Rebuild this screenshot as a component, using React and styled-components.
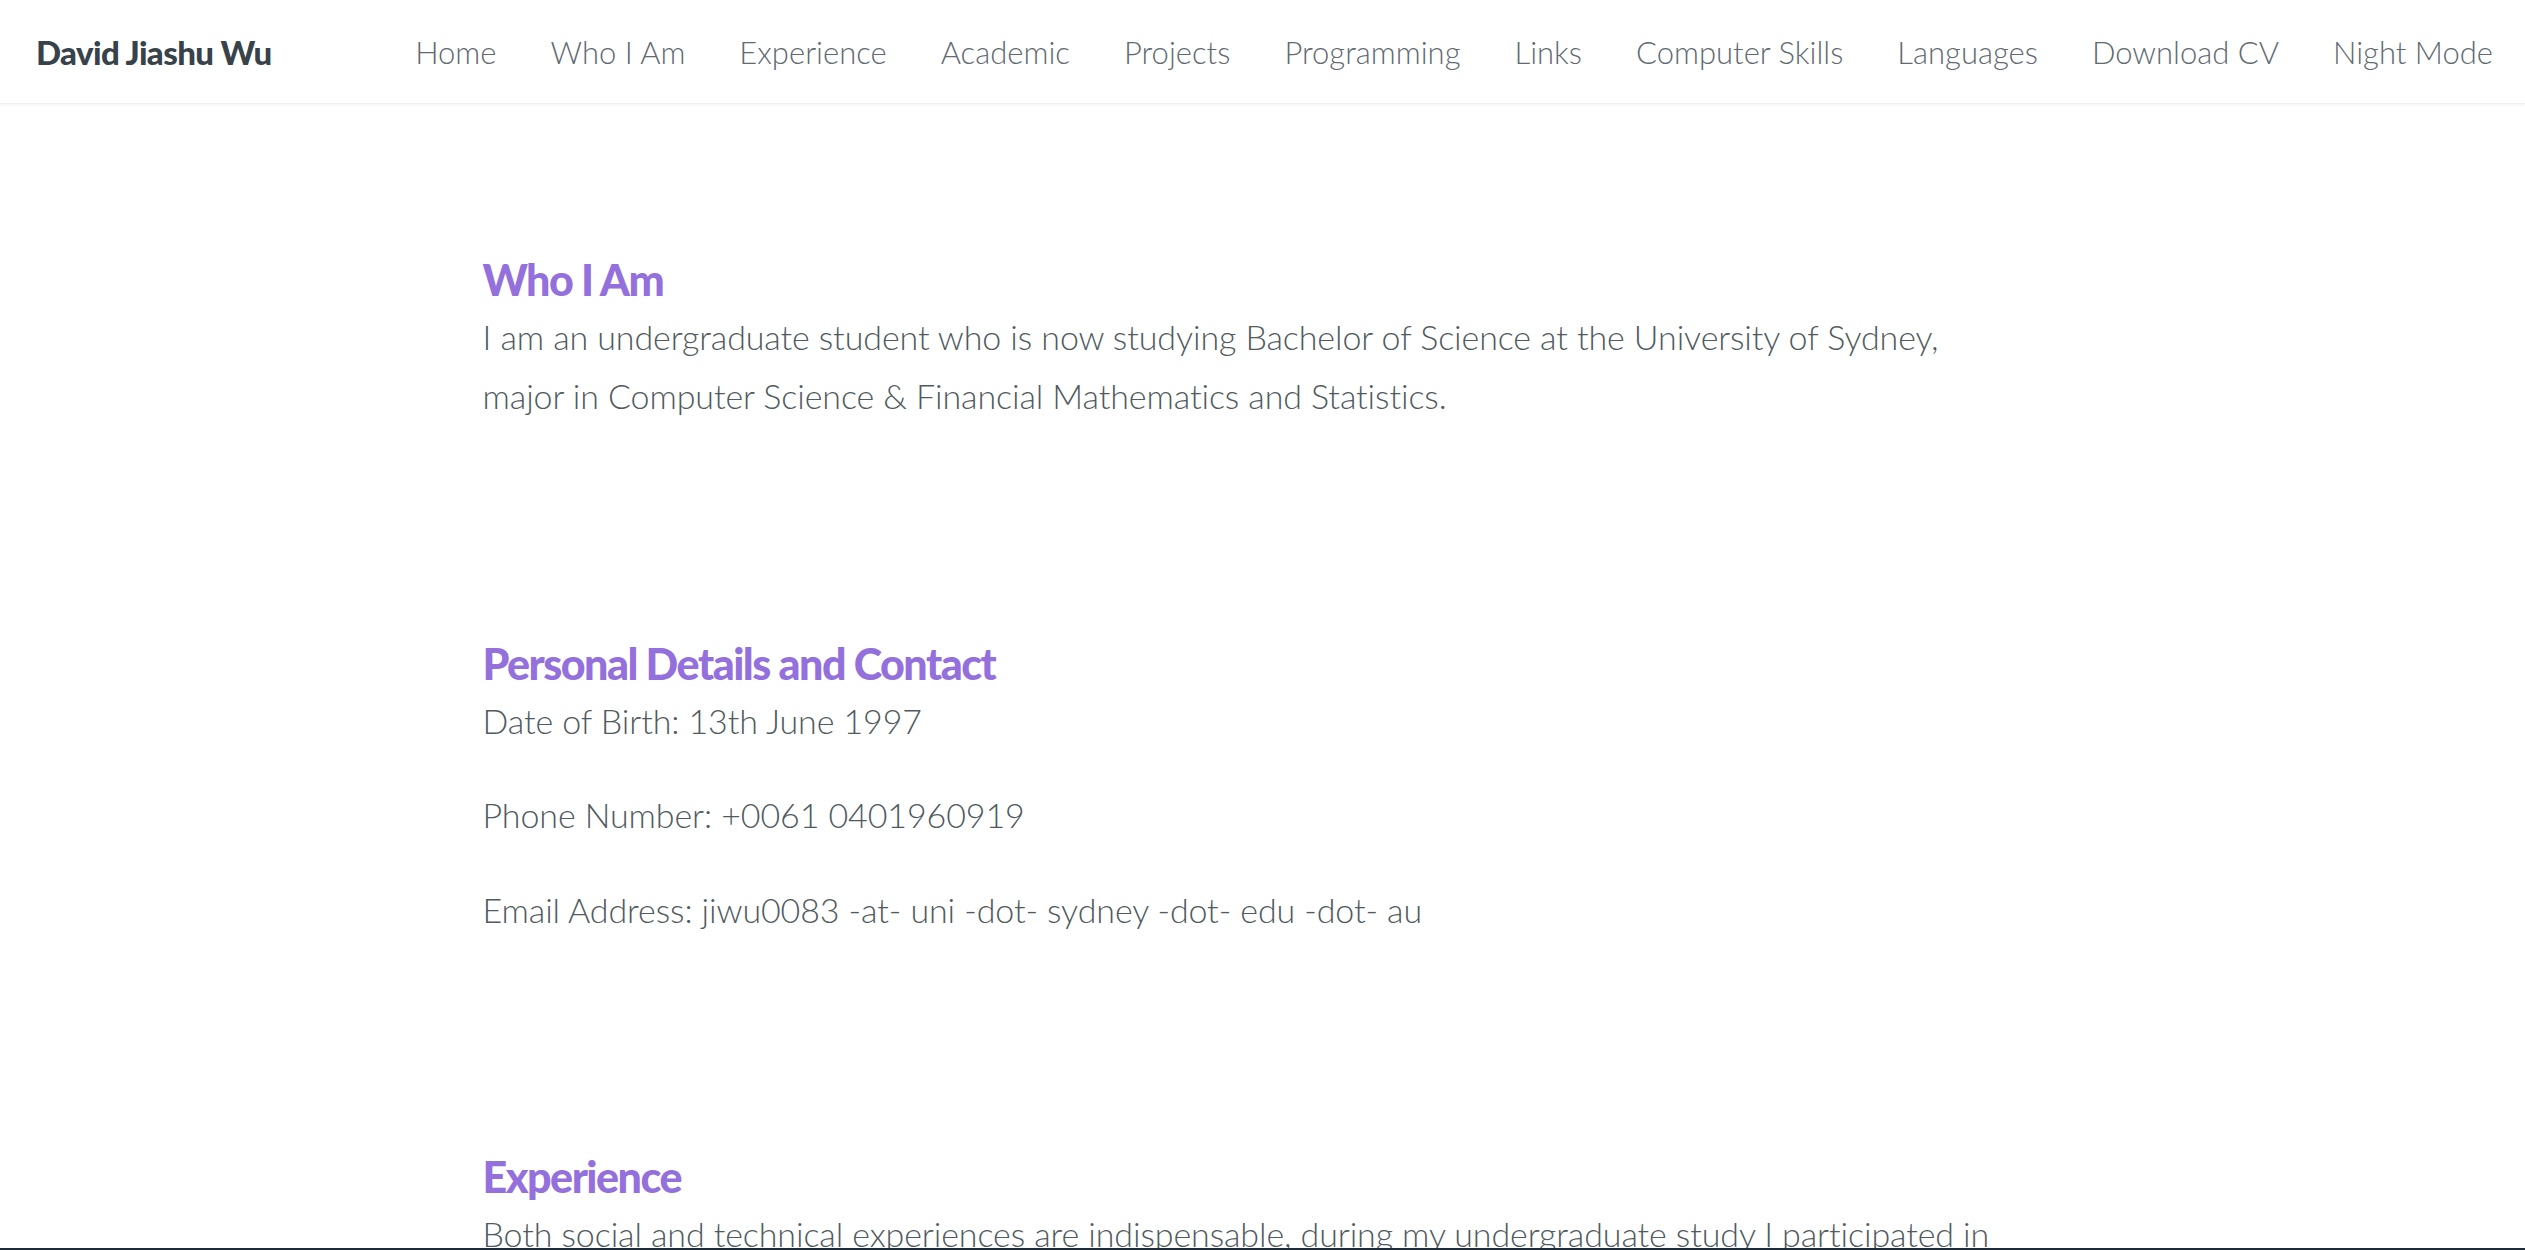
import React from "react";
import styled, { createGlobalStyle } from "styled-components";

const GlobalStyle = createGlobalStyle`
  html, body {
    margin: 0;
    padding: 0;
    background: #ffffff;
  }
  body {
    font-family: Lato, "Open Sans", "Liberation Sans", sans-serif;
    color: #505a60;
    -webkit-font-smoothing: antialiased;
  }
`;

const NavBar = styled.nav`
  height: 104px;
  display: flex;
  align-items: center;
  justify-content: space-between;
  padding: 0 32px 0 36px;
  background: #ffffff;
  box-shadow: 0 1px 3px rgba(0, 0, 0, 0.06);
  border-bottom: 1px solid #f1f1f1;
  box-sizing: border-box;
`;

const Brand = styled.a`
  font-family: Lato, "Liberation Sans", sans-serif;
  font-weight: 900;
  font-size: 33px;
  letter-spacing: -0.6px;
  color: #37424a;
  text-decoration: none;
`;

const NavLinks = styled.ul`
  display: flex;
  align-items: center;
  gap: 54px;
  list-style: none;
  margin: 0;
  padding: 0;
`;

const NavLink = styled.a`
  font-family: Lato, "Liberation Sans", sans-serif;
  font-weight: 300;
  font-size: 31px;
  color: #5f6a71;
  text-decoration: none;
  white-space: nowrap;
`;

const Main = styled.main`
  max-width: 1560px;
  margin: 0 auto;
  padding: 44px 32px 0 0;
  box-sizing: border-box;
`;

const Section = styled.section`
  padding: 106.5px 0;
`;

const Heading = styled.h2`
  margin: 0 0 2px;
  font-family: Lato, "Liberation Sans", sans-serif;
  font-weight: 900;
  font-size: 43px;
  line-height: 50px;
  letter-spacing: -1.5px;
  color: #9370db;
`;

const Text = styled.p`
  margin: 0 0 35px;
  font-weight: 300;
  font-size: 34px;
  line-height: 59.5px;
  letter-spacing: -0.1px;
  color: #505a60;

  &:last-child {
    margin-bottom: 0;
  }
`;

const BottomEdge = styled.div`
  position: fixed;
  left: 0;
  right: 0;
  bottom: 0;
  height: 2px;
  background: #1f2b36;
`;

const links = [
  "Home",
  "Who I Am",
  "Experience",
  "Academic",
  "Projects",
  "Programming",
  "Links",
  "Computer Skills",
  "Languages",
  "Download CV",
  "Night Mode",
];

export default function App() {
  return (
    <>
      <GlobalStyle />
      <NavBar>
        <Brand href="#">David Jiashu Wu</Brand>
        <NavLinks>
          {links.map((l) => (
            <li key={l}>
              <NavLink href="#">{l}</NavLink>
            </li>
          ))}
        </NavLinks>
      </NavBar>
      <Main>
        <Section>
          <Heading>Who I Am</Heading>
          <Text>
            I am an undergraduate student who is now studying Bachelor of Science at the
            University of Sydney, major in Computer Science &amp; Financial Mathematics and
            Statistics.
          </Text>
        </Section>
        <Section>
          <Heading>Personal Details and Contact</Heading>
          <Text>Date of Birth: 13th June 1997</Text>
          <Text>Phone Number: +0061 0401960919</Text>
          <Text>Email Address: jiwu0083 -at- uni -dot- sydney -dot- edu -dot- au</Text>
        </Section>
        <Section>
          <Heading>Experience</Heading>
          <Text>
            Both social and technical experiences are indispensable, during my undergraduate
            study I participated in various activities and internships which helped me grow
            both as a developer and as a person.
          </Text>
        </Section>
      </Main>
      <BottomEdge />
    </>
  );
}
